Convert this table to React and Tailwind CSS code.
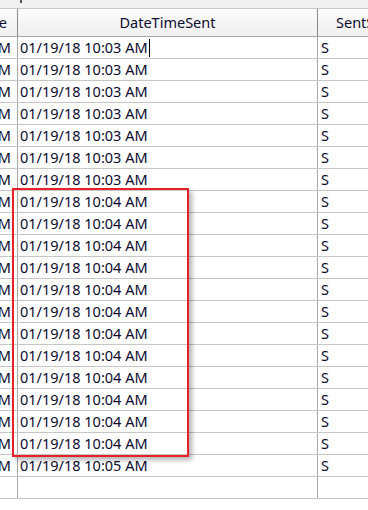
import React from "react";

const rows = [
  ...Array(7).fill("01/19/18 10:03 AM"),
  ...Array(12).fill("01/19/18 10:04 AM"),
  "01/19/18 10:05 AM",
  "",
];

export default function App() {
  return (
    <div
      className="relative w-[368px] h-[510px] bg-white overflow-hidden text-[#0b0b2e]"
      style={{ fontFamily: '"Noto Sans", "Open Sans", sans-serif' }}
    >
      <div className="h-[8px] bg-[#f0f0f0] relative">
        <div className="absolute left-[20px] top-0 w-[2px] h-[3px] bg-[#555]" />
      </div>
      <div className="h-[1px] bg-[#c9c9c9]" />
      <div className="flex h-[28px] border-b border-[#a8a8a8] bg-gradient-to-b from-[#fbfbfb] to-[#f0f0f0] text-[14.5px]">
        <div className="w-[18px] shrink-0 border-r border-[#8a8a8a] overflow-hidden flex items-center justify-end">
          <span className="mr-[10px] whitespace-nowrap">Sent Time</span>
        </div>
        <div className="w-[300px] shrink-0 border-r border-[#8a8a8a] flex items-center justify-center pt-[1px]">
          DateTimeSent
        </div>
        <div className="flex-1 min-w-0 overflow-hidden flex items-center pl-[18px] whitespace-nowrap pt-[1px]">
          SentStatus
        </div>
      </div>
      {rows.map((r, i) => (
        <div key={i} className="flex h-[22px] border-b border-[#c6c6c6] text-[14.5px]">
          <div className="w-[18px] shrink-0 border-r border-[#a8a8a8] overflow-hidden flex items-center justify-end">
            {r && <span className="mr-[6px] whitespace-nowrap">AM</span>}
          </div>
          <div className="w-[300px] shrink-0 border-r border-[#a8a8a8] flex items-center pl-[2px] whitespace-nowrap">
            {r}
            {i === 0 && <span className="ml-[1px] w-[1px] h-[18px] bg-black" />}
          </div>
          <div className="flex-1 min-w-0 flex items-center pl-[3px]">{r ? "S" : ""}</div>
        </div>
      ))}
      <div className="absolute left-[12px] top-[188px] w-[177px] h-[269px] border-2 border-[#e8202a] shadow-[3px_3px_5px_rgba(0,0,0,0.3)]" />
    </div>
  );
}
